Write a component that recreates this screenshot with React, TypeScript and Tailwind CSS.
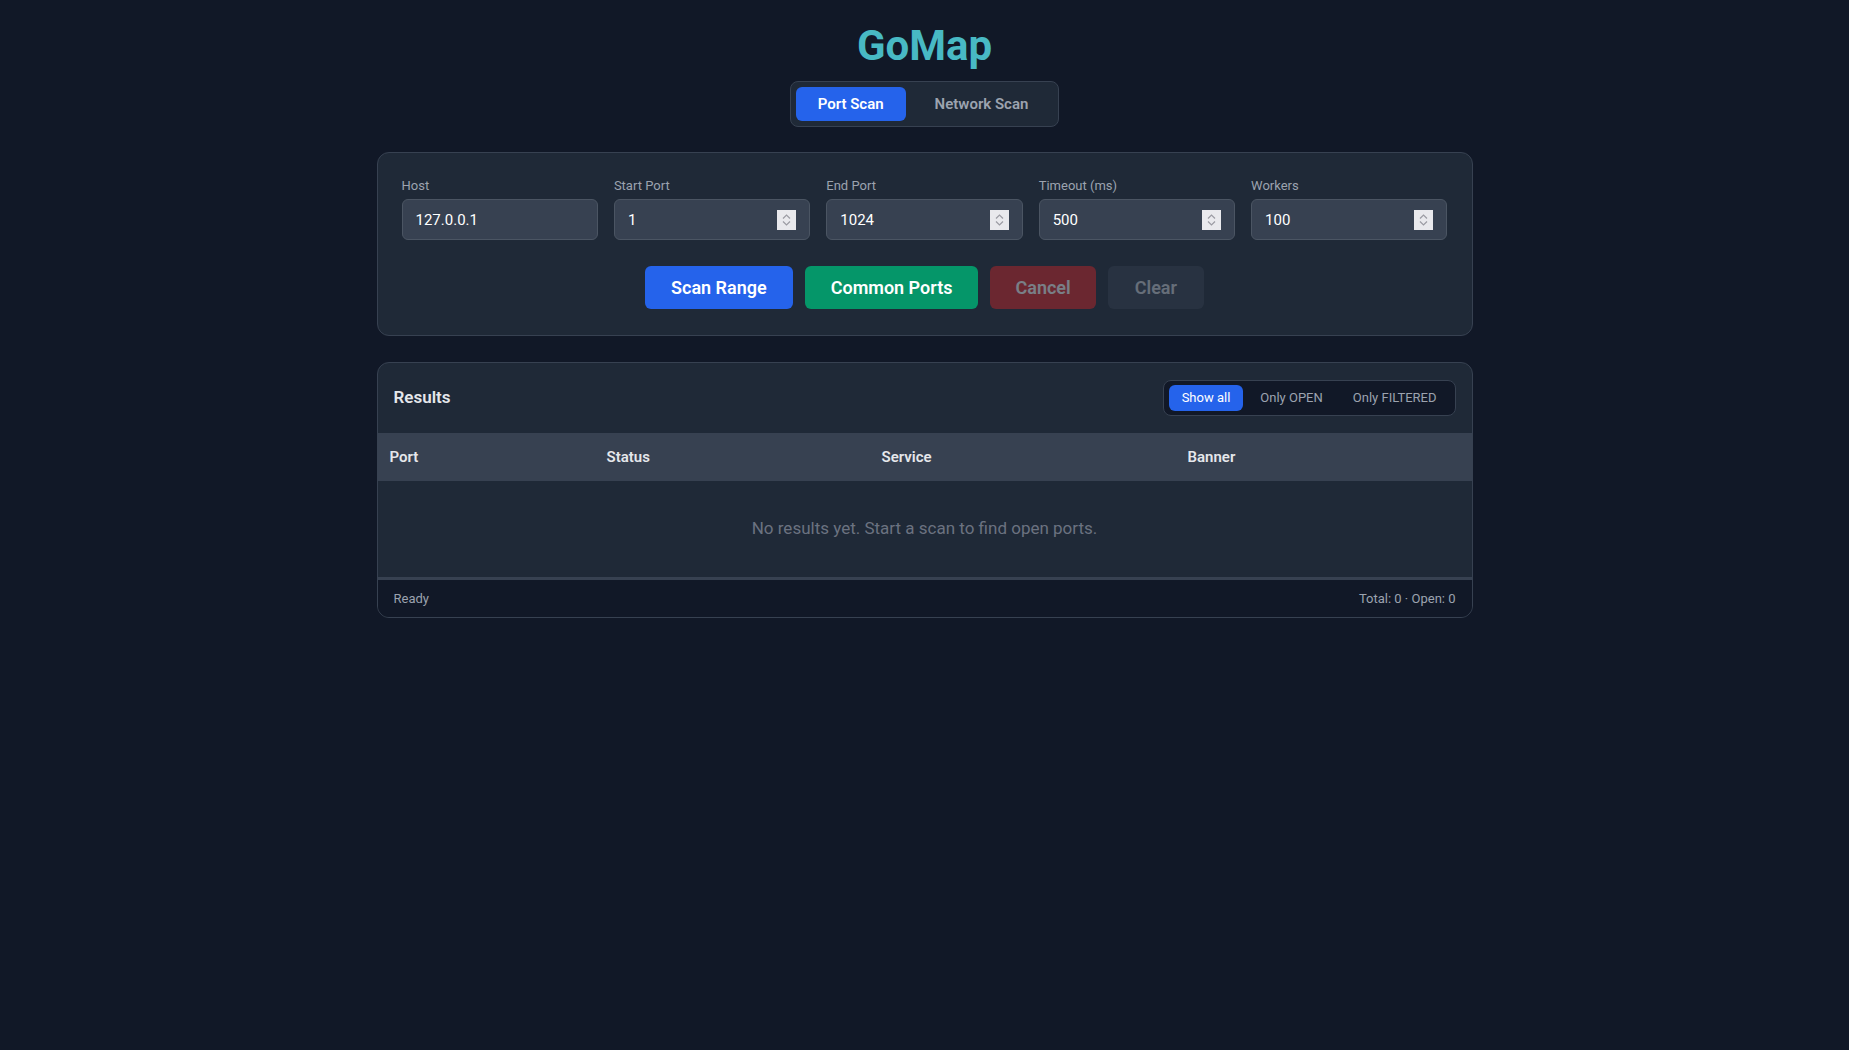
import React from "react";

const fields = [
  { label: "Host", value: "127.0.0.1", spinner: false },
  { label: "Start Port", value: "1", spinner: true },
  { label: "End Port", value: "1024", spinner: true },
  { label: "Timeout (ms)", value: "500", spinner: true },
  { label: "Workers", value: "100", spinner: true },
];

function Spinner() {
  return (
    <svg
      className="absolute right-[14px] top-1/2 -translate-y-1/2 pointer-events-none"
      width="19"
      height="20"
      viewBox="0 0 19 20"
    >
      <rect width="19" height="20" fill="#e9e9ed" />
      <polyline points="6,8.5 9.5,5 13,8.5" fill="none" stroke="#9b9ba3" strokeWidth="1.2" />
      <polyline points="6,11.5 9.5,15 13,11.5" fill="none" stroke="#9b9ba3" strokeWidth="1.2" />
    </svg>
  );
}

export default function App() {
  return (
    <div
      className="min-h-screen bg-[#111827] flex flex-col items-center pt-[22px] text-gray-200"
      style={{ fontFamily: "Roboto, 'Noto Sans', sans-serif" }}
    >
      {/* Title */}
      <h1 className="text-[42px] leading-[48px] font-bold text-[#48b9c4]">GoMap</h1>

      {/* Mode tabs */}
      <div className="mt-[11px] flex gap-1 p-[5px] bg-[#1f2937] border border-[#374151] rounded-lg">
        <button className="h-[34px] px-[22px] rounded-md bg-[#2563eb] text-white text-[15px] font-semibold">
          Port Scan
        </button>
        <button className="h-[34px] px-[25px] rounded-md text-[#9ca3af] text-[15px] font-semibold">
          Network Scan
        </button>
      </div>

      {/* Scan form */}
      <div className="mt-[25px] w-[1096px] bg-[#1f2937] border border-[#374151] rounded-xl px-6 pt-6 pb-[26px]">
        <div className="grid grid-cols-5 gap-4">
          {fields.map((f) => (
            <label key={f.label} className="flex flex-col">
              <span className="text-[13px] leading-[18px] text-[#9ca3af] mb-1">{f.label}</span>
              <div className="relative">
                <input
                  type="text"
                  defaultValue={f.value}
                  className="w-full bg-[#374151] border border-[#4b5563] rounded-md px-[13px] py-[9.5px] leading-5 text-[15px] text-white outline-none"
                />
                {f.spinner && <Spinner />}
              </div>
            </label>
          ))}
        </div>
        <div className="mt-[26px] flex justify-center gap-3">
          <button className="h-[43px] px-[26px] rounded-md bg-[#2563eb] text-white text-lg font-semibold">
            Scan Range
          </button>
          <button className="h-[43px] px-[26px] rounded-md bg-[#059669] text-white text-lg font-semibold">
            Common Ports
          </button>
          <button disabled className="h-[43px] px-[25px] rounded-md bg-[#dc2626] text-white text-lg font-semibold opacity-40">
            Cancel
          </button>
          <button disabled className="h-[43px] px-[27px] rounded-md bg-[#374151] text-gray-300 text-lg font-semibold opacity-40">
            Clear
          </button>
        </div>
      </div>

      {/* Results */}
      <div className="mt-[26px] w-[1096px] bg-[#1f2937] border border-[#374151] rounded-xl overflow-hidden">
        <div className="flex items-center justify-between px-4 py-[17px]">
          <h2 className="text-[17px] font-semibold text-[#e5e7eb]">Results</h2>
          <div className="flex gap-1 px-[5px] py-[4px] bg-[#111827] border border-[#374151] rounded-lg">
            <button className="h-[26px] px-[13px] rounded-md bg-[#2563eb] text-white text-[13px]">Show all</button>
            <button className="h-[26px] px-[13px] rounded-md text-[#9ca3af] text-[13px]">Only OPEN</button>
            <button className="h-[26px] px-[13px] rounded-md text-[#9ca3af] text-[13px]">Only FILTERED</button>
          </div>
        </div>
        <table className="w-full table-fixed border-collapse">
          <colgroup>
            <col className="w-[217px]" />
            <col className="w-[275px]" />
            <col className="w-[306px]" />
            <col />
          </colgroup>
          <thead>
            <tr className="bg-[#374151] h-12">
              <th className="px-3 text-left text-[15px] font-semibold text-[#e5e7eb]">Port</th>
              <th className="px-3 text-left text-[15px] font-semibold text-[#e5e7eb]">Status</th>
              <th className="px-3 text-left text-[15px] font-semibold text-[#e5e7eb]">Service</th>
              <th className="px-3 text-left text-[15px] font-semibold text-[#e5e7eb]">Banner</th>
            </tr>
          </thead>
          <tbody>
            <tr>
              <td colSpan={4} className="h-[96px] text-center text-[17px] text-[#6b7280]">
                No results yet. Start a scan to find open ports.
              </td>
            </tr>
          </tbody>
        </table>
        <div className="flex items-center justify-between h-[40px] px-4 bg-[#111827] border-t-[3px] border-[#374151] text-[13px] text-[#9ca3af]">
          <span>Ready</span>
          <span>Total: 0 · Open: 0</span>
        </div>
      </div>
    </div>
  );
}
